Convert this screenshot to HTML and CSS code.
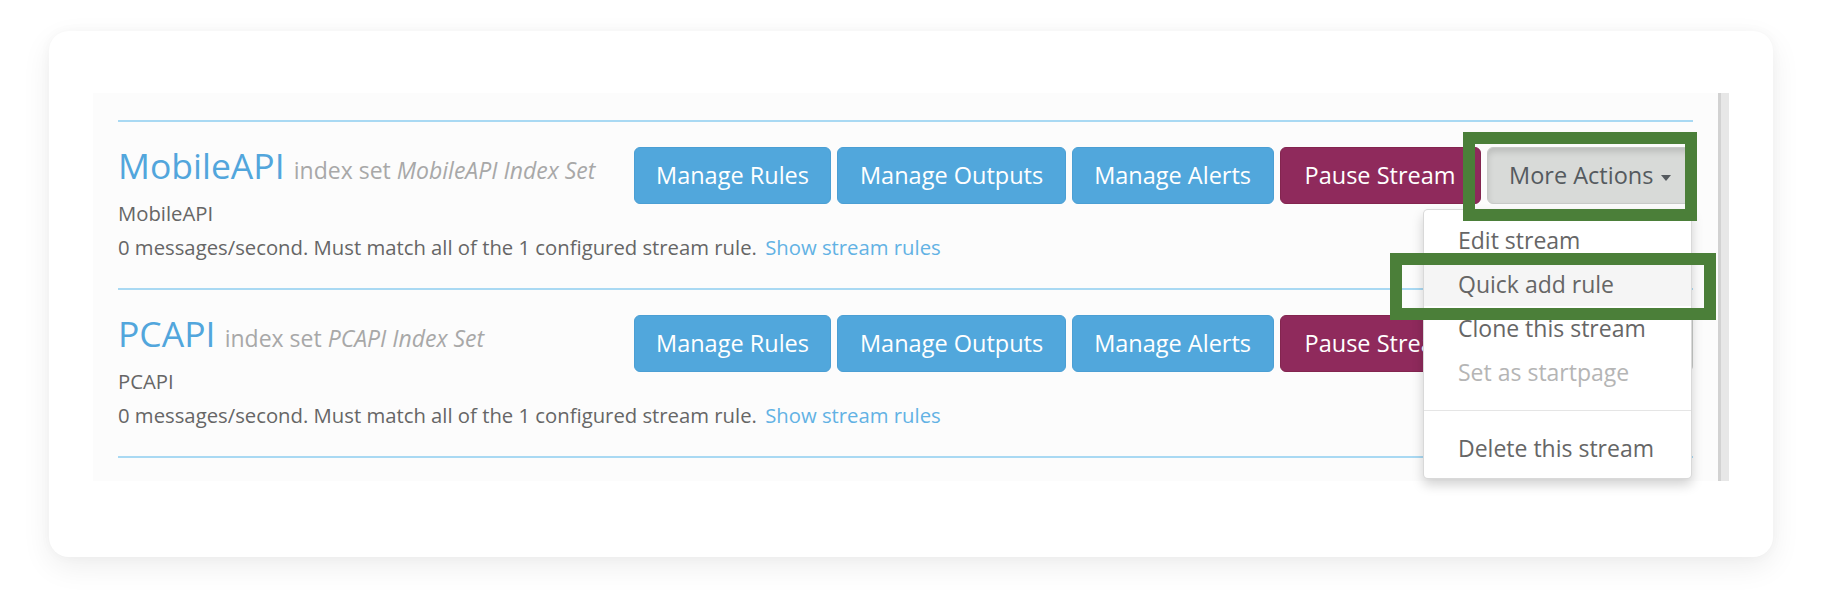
FILE: index.html
```html
<!DOCTYPE html>
<html lang="en">
<head>
<meta charset="utf-8">
<title>Streams</title>
<link rel="stylesheet" href="styles.css">
</head>
<body>
<div class="card">
  <div class="shot">
    <div class="content">
      <ul class="streams">
        <li class="stream">
          <div class="info">
            <h2 class="title">MobileAPI <small>index set <em>MobileAPI Index Set</em></small></h2>
            <div class="desc">MobileAPI</div>
            <div class="meta">0 messages/second. Must match all of the 1 configured stream rule. <a class="link">Show stream rules</a></div>
          </div>
          <div class="actions">
            <button class="btn btn-info">Manage Rules</button>
            <button class="btn btn-info">Manage Outputs</button>
            <button class="btn btn-info">Manage Alerts</button>
            <button class="btn btn-primary">Pause Stream</button>
            <div class="btn-group">
              <button class="btn btn-default active">More Actions <span class="caret"></span></button>
              <span class="highlight hl-button"></span>
              <ul class="dropdown">
                <li class="item">Edit stream</li>
                <li class="item hover">Quick add rule<span class="highlight hl-item"></span></li>
                <li class="item">Clone this stream</li>
                <li class="item disabled">Set as startpage</li>
                <li class="divider"></li>
                <li class="item">Delete this stream</li>
              </ul>
            </div>
          </div>
        </li>
        <li class="stream">
          <div class="info">
            <h2 class="title">PCAPI <small>index set <em>PCAPI Index Set</em></small></h2>
            <div class="desc">PCAPI</div>
            <div class="meta">0 messages/second. Must match all of the 1 configured stream rule. <a class="link">Show stream rules</a></div>
          </div>
          <div class="actions">
            <button class="btn btn-info">Manage Rules</button>
            <button class="btn btn-info">Manage Outputs</button>
            <button class="btn btn-info">Manage Alerts</button>
            <button class="btn btn-primary">Pause Stream</button>
            <div class="btn-group">
              <button class="btn btn-default">More Actions <span class="caret"></span></button>
            </div>
          </div>
        </li>
      </ul>
    </div>
    <div class="scrollbar"></div>
  </div>
</div>
</body>
</html>
```

FILE: styles.css
```css
* { box-sizing: border-box; }

html, body {
  margin: 0;
  padding: 0;
  background: #ffffff;
}

body {
  padding: 31px 57px 51px 49px;
  font-family: "Open Sans", "DejaVu Sans", sans-serif;
}

.card {
  width: 1724px;
  height: 526px;
  background: #ffffff;
  border-radius: 20px;
  box-shadow: 0 10px 30px rgba(0, 0, 0, 0.07), 0 0 12px rgba(0, 0, 0, 0.03);
  padding: 62px 44px 76px;
}

.shot {
  display: flex;
  height: 388px;
  background: #fcfcfc;
}

.content {
  flex: 1;
  min-width: 0;
  padding: 27px 25px 0;
}

.scrollbar {
  width: 11px;
  background: #e7e7e7;
  border-left: 3px solid #d2d2d2;
}

.streams {
  list-style: none;
  margin: 0;
  padding: 0;
  border-bottom: 2px solid #a9d9f3;
}

.stream {
  display: flex;
  align-items: flex-start;
  border-top: 2px solid #a9d9f3;
  padding: 25px 0 26.4px;
}

.info {
  flex: 1 1 0;
  min-width: 0;
}

.title {
  margin: 0;
  font-size: 35.5px;
  line-height: 37px;
  font-weight: 400;
  color: #52a6dc;
  white-space: nowrap;
}

.title small {
  font-size: 23px;
  line-height: 1;
  color: #a8a8a8;
}

.desc {
  margin-top: 15px;
  font-size: 20.3px;
  line-height: 28.6px;
  color: #666666;
}

.meta {
  margin-top: 5.6px;
  font-size: 20.3px;
  line-height: 28.6px;
  color: #666666;
  white-space: nowrap;
}

.link {
  color: #62b2e4;
  margin-left: 3px;
}

.actions {
  flex: none;
  display: flex;
  gap: 6px;
}

.btn {
  font-family: "Open Sans", "DejaVu Sans", sans-serif;
  font-size: 23.5px;
  line-height: 33px;
  height: 57px;
  padding: 11px 21.5px;
  border: 1px solid transparent;
  border-radius: 6px;
  color: #ffffff;
  white-space: nowrap;
  cursor: pointer;
}

.btn-info {
  background: #51a7dc;
  border-color: #4b9fd4;
}

.btn-primary {
  background: #8f2a5c;
  border-color: #83254f;
  padding-left: 24px;
  padding-right: 24px;
}

.btn-default {
  background: #e4e5e4;
  border-color: #c8cac8;
  color: #555a5f;
}

.btn-default.active {
  background: #d8dad8;
  box-shadow: inset 0 4px 6px rgba(0, 0, 0, 0.13);
}

.caret {
  display: inline-block;
  width: 0;
  height: 0;
  margin-left: 1px;
  vertical-align: middle;
  border-top: 6px solid #555a5f;
  border-left: 5.5px solid transparent;
  border-right: 5.5px solid transparent;
}

.btn-group {
  position: relative;
}

.dropdown {
  position: absolute;
  top: calc(100% + 5px);
  right: 1px;
  width: 269px;
  margin: 0;
  padding: 8px 0 7px;
  list-style: none;
  background: #ffffff;
  border: 1px solid rgba(0, 0, 0, 0.15);
  border-radius: 5px;
  box-shadow: 0 6px 12px rgba(0, 0, 0, 0.175);
  z-index: 10;
}

.item {
  position: relative;
  padding: 5.5px 20px 5.5px 34px;
  font-size: 23px;
  line-height: 33px;
  color: #666666;
  white-space: nowrap;
}

.item.hover {
  background: #f5f5f5;
}

.item.disabled {
  color: #b5b5b5;
}

.divider {
  height: 1px;
  margin: 15.85px 0;
  background: #e5e5e5;
}

.highlight {
  position: absolute;
  border: 12px solid #4b7f39;
  z-index: 20;
}

.hl-button {
  right: -4px;
  top: -15px;
  width: 234px;
  height: 89px;
}

.hl-item {
  left: -34px;
  top: -9px;
  width: 326px;
  height: 67px;
}
```
